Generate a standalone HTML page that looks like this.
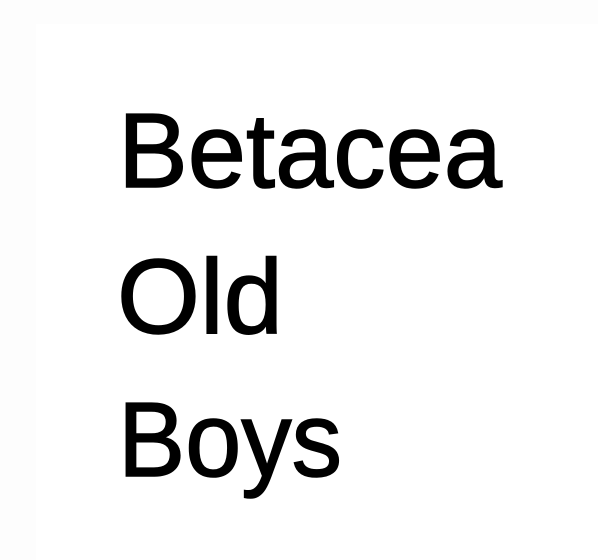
<!DOCTYPE html>
<html><head><style>html,body{margin:0;padding:0;background:#fff;width:598px;height:560px;overflow:hidden}</style></head>
<body>
<svg width="598" height="560" xmlns="http://www.w3.org/2000/svg">
<rect width="598" height="560" fill="#fdfdfd"/>
<rect x="36" y="24" width="562" height="536" fill="#fff"/>
<g font-family="Liberation Sans, sans-serif" font-size="106" fill="#000" stroke="#000" stroke-width="1.5">
<text x="118" y="187" textLength="384" lengthAdjust="spacingAndGlyphs">Betacea</text>
<text x="117" y="333" textLength="166" lengthAdjust="spacingAndGlyphs">Old</text>
<text x="118" y="476" textLength="224" lengthAdjust="spacingAndGlyphs">Boys</text>
</g>
</svg>
</body></html>
